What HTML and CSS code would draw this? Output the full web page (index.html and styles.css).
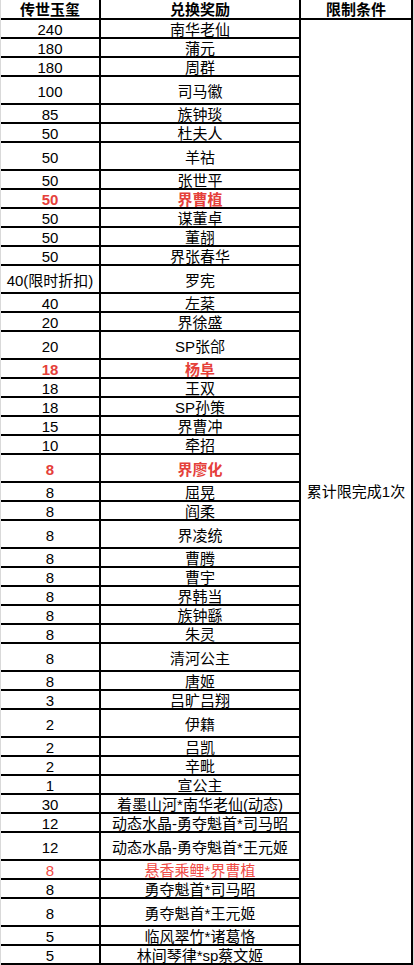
FILE: index.html
```html
<!DOCTYPE html>
<html lang="zh-CN">
<head>
<meta charset="utf-8">
<title>传世玉玺兑换</title>
<link rel="stylesheet" href="styles.css">
</head>
<body>
<div class="sheet">
  <div class="cell head">传世玉玺</div>
  <div class="cell head">兑换奖励</div>
  <div class="cell head">限制条件</div>
  <div class="cell limit">累计限完成1次</div>

  <div class="cell">240</div><div class="cell">南华老仙</div>
  <div class="cell">180</div><div class="cell">蒲元</div>
  <div class="cell">180</div><div class="cell">周群</div>
  <div class="cell">100</div><div class="cell">司马徽</div>
  <div class="cell">85</div><div class="cell">族钟琰</div>
  <div class="cell">50</div><div class="cell">杜夫人</div>
  <div class="cell">50</div><div class="cell">羊祜</div>
  <div class="cell">50</div><div class="cell">张世平</div>
  <div class="cell hot">50</div><div class="cell hot">界曹植</div>
  <div class="cell">50</div><div class="cell">谋董卓</div>
  <div class="cell">50</div><div class="cell">董翓</div>
  <div class="cell">50</div><div class="cell">界张春华</div>
  <div class="cell">40(限时折扣)</div><div class="cell">罗宪</div>
  <div class="cell">40</div><div class="cell">左棻</div>
  <div class="cell">20</div><div class="cell">界徐盛</div>
  <div class="cell">20</div><div class="cell">SP张郃</div>
  <div class="cell hot">18</div><div class="cell hot">杨阜</div>
  <div class="cell">18</div><div class="cell">王双</div>
  <div class="cell">18</div><div class="cell">SP孙策</div>
  <div class="cell">15</div><div class="cell">界曹冲</div>
  <div class="cell">10</div><div class="cell">牵招</div>
  <div class="cell hot">8</div><div class="cell hot">界廖化</div>
  <div class="cell">8</div><div class="cell">屈晃</div>
  <div class="cell">8</div><div class="cell">阎柔</div>
  <div class="cell">8</div><div class="cell">界凌统</div>
  <div class="cell">8</div><div class="cell">曹腾</div>
  <div class="cell">8</div><div class="cell">曹宇</div>
  <div class="cell">8</div><div class="cell">界韩当</div>
  <div class="cell">8</div><div class="cell">族钟繇</div>
  <div class="cell">8</div><div class="cell">朱灵</div>
  <div class="cell">8</div><div class="cell">清河公主</div>
  <div class="cell">8</div><div class="cell">唐姬</div>
  <div class="cell">3</div><div class="cell">吕旷吕翔</div>
  <div class="cell">2</div><div class="cell">伊籍</div>
  <div class="cell">2</div><div class="cell">吕凯</div>
  <div class="cell">2</div><div class="cell">辛毗</div>
  <div class="cell">1</div><div class="cell">宣公主</div>
  <div class="cell">30</div><div class="cell">着墨山河*南华老仙(动态)</div>
  <div class="cell">12</div><div class="cell">动态水晶-勇夺魁首*司马昭</div>
  <div class="cell">12</div><div class="cell">动态水晶-勇夺魁首*王元姬</div>
  <div class="cell warm">8</div><div class="cell warm">悬香乘鲤*界曹植</div>
  <div class="cell">8</div><div class="cell">勇夺魁首*司马昭</div>
  <div class="cell">8</div><div class="cell">勇夺魁首*王元姬</div>
  <div class="cell">5</div><div class="cell">临风翠竹*诸葛恪</div>
  <div class="cell">5</div><div class="cell">林间琴律*sp蔡文姬</div>
</div>
</body>
</html>
```
FILE: styles.css
```css
html, body {
  margin: 0;
  padding: 0;
}
body {
  background: #d9d9d9;
  width: 414px;
  height: 965px;
  overflow: hidden;
  font-family: "Liberation Sans", "Noto Sans CJK SC", sans-serif;
  font-size: 15px;
  color: #000;
}
.sheet {
  margin-left: 1px;
  width: 410px;
  display: grid;
  grid-template-columns: 98px 198px 110px;
  grid-template-rows:
    18px
    17px 17px 17px 26px 17px 17px 26px 17px 17px 17px
    17px 17px 26px 17px 17px 26px 17px 17px 17px 17px
    17px 26px 17px 17px 26px 17px 17px 17px 17px 17px
    26px 17px 17px 26px 17px 17px 17px 17px 17px 26px
    17px 17px 26px 17px 17px;
  gap: 2px;
  background: #000;
  padding: 0 2px 2px 0;
}
.cell {
  background: #fff;
  display: flex;
  align-items: center;
  justify-content: center;
  line-height: 1;
  padding-top: 2px;
  white-space: nowrap;
  overflow: hidden;
}
.head {
  font-weight: bold;
  padding-top: 0;
}
.limit {
  grid-column: 3;
  grid-row: 2 / span 45;
  padding-top: 0;
}
.hot {
  color: #e5403a;
  font-weight: bold;
}
.warm {
  color: #f04a44;
}
```
